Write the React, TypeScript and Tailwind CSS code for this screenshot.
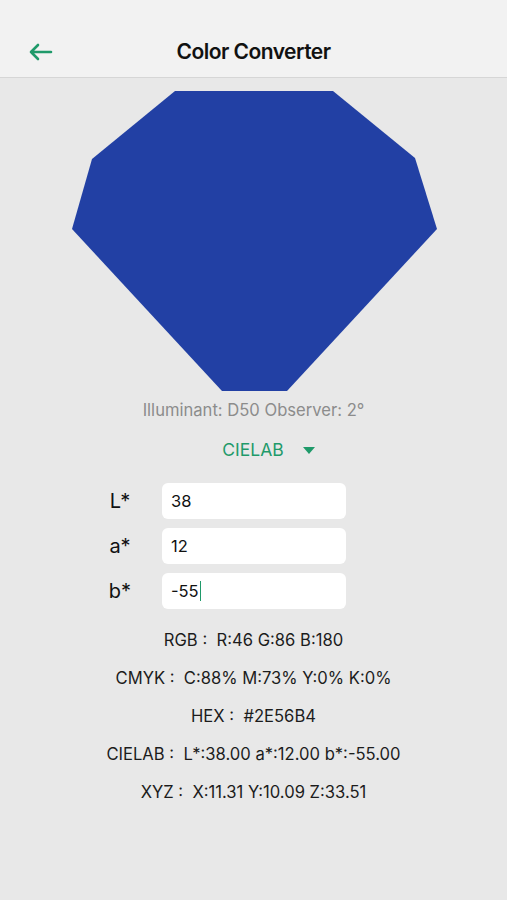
import React from 'react';

const font = { fontFamily: 'Inter, "Liberation Sans", sans-serif' };

const results = [
  ['RGB :', 'R:46 G:86 B:180'],
  ['CMYK :', 'C:88% M:73% Y:0% K:0%'],
  ['HEX :', '#2E56B4'],
  ['CIELAB :', 'L*:38.00 a*:12.00 b*:-55.00'],
  ['XYZ :', 'X:11.31 Y:10.09 Z:33.51'],
];

const fields = [
  { label: 'L*', value: '38' },
  { label: 'a*', value: '12' },
  { label: 'b*', value: '-55' },
];

export default function App() {
  return (
    <div className="min-h-[900px] w-full bg-[#e8e8e8] flex flex-col" style={font}>
      {/* header */}
      <div className="h-[78px] bg-[#f2f2f2] border-b border-[#d6d6d6] pt-[26px]">
        <div className="relative h-[52px] flex items-center justify-center">
          <svg className="absolute left-[28px] top-[17px]" width="25" height="18" viewBox="0 0 25 18" fill="none">
            <path d="M23 9H3M10 2L3 9l7 7" stroke="#1f9a6a" strokeWidth="2.6" strokeLinecap="round" strokeLinejoin="round" />
          </svg>
          <h1 className="text-[21px] font-semibold text-[#111] tracking-tight">Color Converter</h1>
        </div>
      </div>

      {/* swatch */}
      <svg className="block mt-[13px]" width="507" height="300" viewBox="0 91 507 300">
        <polygon
          points="175,91 333,91 415,158 437,229 287,391 222,391 72,229 92,159"
          fill="#2240a4"
        />
      </svg>

      <p className="mt-[7px] text-center text-[16.6px] leading-6 text-[#8c8c8c]">Illuminant: D50 Observer: 2°</p>

      <div className="mt-[16px] flex items-center justify-center gap-[19px] pl-[30px]">
        <span className="text-[17.5px] leading-6 text-[#1f9a6a]">CIELAB</span>
        <svg width="12" height="7" viewBox="0 0 12 7">
          <polygon points="0,0 12,0 6,7" fill="#1f9a6a" />
        </svg>
      </div>

      <div className="mt-[21px] flex flex-col gap-[9px]">
        {fields.map((f) => (
          <div key={f.label} className="flex items-center pl-[100px]">
            <span className="w-[40px] text-center text-[20px] text-[#111]">{f.label}</span>
            <div className="ml-[22px] w-[184px] h-[36px] bg-white rounded-[6px] flex items-center px-[9px] text-[16.5px] text-[#111]">
              {f.value}
              {f.label === 'b*' && <span className="ml-[1px] w-px h-[20px] bg-[#1f9a6a]" />}
            </div>
          </div>
        ))}
      </div>

      <div className="mt-[19px] flex flex-col gap-[14px]">
        {results.map(([k, v]) => (
          <p key={k} className="text-center text-[16.6px] leading-6 text-[#1c1c1c]">
            {k}&nbsp; {v}
          </p>
        ))}
      </div>
    </div>
  );
}
